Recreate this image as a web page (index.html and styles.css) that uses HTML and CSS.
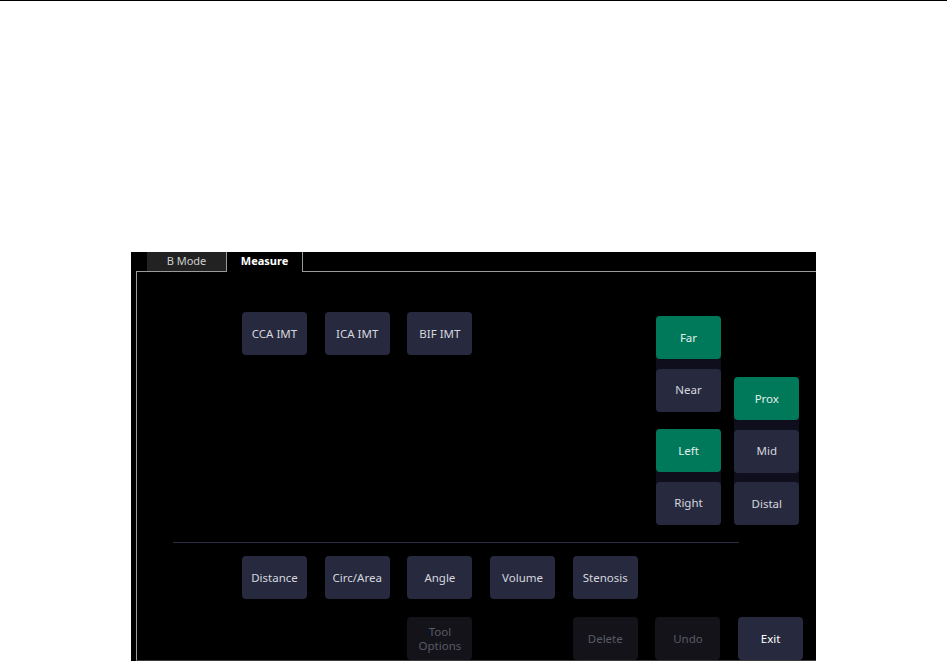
FILE: index.html
```html
<!DOCTYPE html>
<html>
<head>
<meta charset="utf-8">
<link rel="stylesheet" href="styles.css">
</head>
<body>
<div class="stage">
  <div class="panel">
    <div class="tabs">
      <div class="tab tab-bmode">B Mode</div>
      <div class="tab tab-measure">Measure</div>
    </div>
    <div class="content">
      <div class="top">
        <div class="imt-row">
          <div class="btn">CCA IMT</div>
          <div class="btn">ICA IMT</div>
          <div class="btn">BIF IMT</div>
        </div>
        <div class="col6">
          <div class="group">
            <div class="btn green">Far</div>
            <div class="btn">Near</div>
          </div>
          <div class="group">
            <div class="btn green">Left</div>
            <div class="btn">Right</div>
          </div>
        </div>
        <div class="col7">
          <div class="group">
            <div class="btn green">Prox</div>
            <div class="btn">Mid</div>
            <div class="btn">Distal</div>
          </div>
        </div>
      </div>
      <div class="sep"></div>
      <div class="bottom">
        <div class="btn">Distance</div>
        <div class="btn">Circ/Area</div>
        <div class="btn">Angle</div>
        <div class="btn">Volume</div>
        <div class="btn">Stenosis</div>
        <div class="btn disabled c3">Tool<br>Options</div>
        <div class="btn disabled c5">Delete</div>
        <div class="btn disabled c6">Undo</div>
        <div class="btn exit c7">Exit</div>
      </div>
    </div>
  </div>
</div>
</body>
</html>
```
FILE: styles.css
```css
html, body {
  margin: 0;
  padding: 0;
}
body {
  background: #fff;
  border-top: 1px solid #000;
  font-family: "Noto Sans", "DejaVu Sans", sans-serif;
}
.stage {
  height: 660px;
  box-sizing: border-box;
  padding: 251px 0 0 131px;
  overflow: hidden;
}
.panel {
  width: 685px;
  height: 409px;
  background: #000;
  overflow: hidden;
}
.tabs {
  display: flex;
  height: 19px;
  padding-left: 16px;
  position: relative;
  z-index: 1;
}
.tab {
  height: 19px;
  line-height: 17px;
  font-size: 11px;
  text-align: center;
  box-sizing: border-box;
}
.tab-bmode {
  width: 79px;
  background: #222;
  color: #cfcfcf;
}
.tab-measure {
  width: 77px;
  height: 20px;
  background: #000;
  color: #fff;
  font-weight: bold;
  border-left: 1px solid #9a9a9a;
  border-right: 1px solid #9a9a9a;
}
.content {
  margin-left: 5px;
  border-top: 1px solid #9a9a9a;
  border-left: 1px solid #9a9a9a;
  border-bottom: 1px solid #3c3c3c;
}
.top {
  display: flex;
  align-items: flex-start;
  height: 270px;
  padding-left: 105px;
}
.imt-row {
  display: flex;
  gap: 17.7px;
  margin-top: 40px;
  width: 395.8px;
  margin-right: 18.2px;
  flex: none;
}
.col6 {
  display: flex;
  flex-direction: column;
  gap: 17.5px;
  margin-top: 44px;
}
.col7 {
  margin-top: 105px;
  margin-left: 13.3px;
}
.group {
  display: flex;
  flex-direction: column;
  gap: 9.5px;
  background: #0e0e1c;
  border-radius: 4px;
}
.btn {
  width: 65px;
  height: 43px;
  box-sizing: border-box;
  border-radius: 4px;
  background: #272a3e;
  color: #d6d6de;
  font-size: 11.5px;
  line-height: 14px;
  display: flex;
  align-items: center;
  justify-content: center;
  text-align: center;
  flex: none;
}
.btn.green {
  background: #00795b;
  color: #e2efe9;
}
.btn.disabled {
  background: #131319;
  color: #5a5a65;
}
.btn.exit {
  color: #fff;
}
.sep {
  margin-left: 36px;
  width: 566px;
  height: 1px;
  background: #2d2d47;
}
.bottom {
  display: grid;
  grid-template-columns: repeat(7, 65px);
  column-gap: 17.7px;
  row-gap: 18px;
  padding-left: 105px;
  margin-top: 13px;
}
.c3 { grid-column: 3; grid-row: 2; }
.c5 { grid-column: 5; grid-row: 2; }
.c6 { grid-column: 6; grid-row: 2; }
.c7 { grid-column: 7; grid-row: 2; }
```
